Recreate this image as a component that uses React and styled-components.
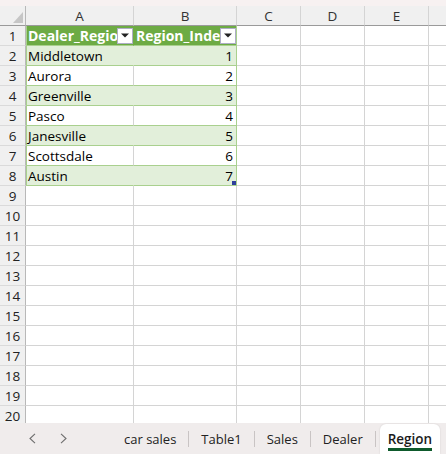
import React from 'react';
import styled, { createGlobalStyle, css } from 'styled-components';

const Global = createGlobalStyle`
  html, body { margin: 0; padding: 0; height: 100%; }
  body { background: #fff; font-family: "Open Sans", "Noto Sans", sans-serif; overflow: hidden; }
  #root { height: 100%; }
  * { box-sizing: border-box; }
`;

const COLS = '26px 108px 103px 64px 64px 64px 64px';
const GREEN = '#6dab44';
const BAND = '#e2efda';
const LINE_G = '#a9d08e';
const GRID = '#d4d4d4';

const Sheet = styled.div`
  display: flex;
  flex-direction: column;
  height: 100vh;
`;

const TopStrip = styled.div`
  height: 6px;
  flex: none;
  background: #f7f1f1;
`;

const GridArea = styled.div`
  flex: 1;
  overflow: hidden;
`;

const ColHeaderRow = styled.div`
  display: grid;
  grid-template-columns: ${COLS};
  height: 20px;
  background: #f0f0f0;
`;

const ColHeader = styled.div`
  display: flex;
  align-items: center;
  justify-content: center;
  border-right: 1px solid ${GRID};
  border-bottom: 1px solid #9a9a9a;
  font-size: 13.5px;
  color: #333;
`;

const Corner = styled.div`
  position: relative;
  border-right: 1px solid #b8b8b8;
  border-bottom: 1px solid #9a9a9a;
  background: #f0f0f0;
  svg { position: absolute; right: 2px; bottom: 2px; }
`;

const Row = styled.div`
  display: grid;
  grid-template-columns: ${COLS};
  height: 20px;
`;

const RowHeader = styled.div`
  display: flex;
  align-items: center;
  justify-content: center;
  background: #f0f0f0;
  border-right: 1px solid #b8b8b8;
  border-bottom: 1px solid #dadada;
  font-size: 13.5px;
  color: #222;
`;

const variants = {
  head: css`
    background: ${GREEN};
    color: #fff;
    font-weight: 700;
    font-size: 14px;
    border-bottom-color: ${LINE_G};
  `,
  band: css`
    background: ${BAND};
    border-bottom-color: ${LINE_G};
  `,
  plain: css`
    background: #fff;
    border-bottom-color: ${LINE_G};
  `,
  empty: css``,
};

const Cell = styled.div`
  position: relative;
  display: flex;
  align-items: center;
  justify-content: ${p => (p.$num ? 'flex-end' : 'flex-start')};
  padding: 0 3px 0 2px;
  border-right: 1px solid ${GRID};
  border-bottom: 1px solid ${GRID};
  font-size: 13.5px;
  color: #000;
  white-space: nowrap;
  overflow: hidden;
  ${p => variants[p.$v || 'empty']}
  ${p => p.$col === 'A' && p.$v !== 'empty' && css`
    box-shadow: inset 1px 0 0 ${LINE_G};
    border-right-color: ${p.$v === 'plain' ? GRID : p.$v === 'head' ? GREEN : BAND};
  `}
  ${p => p.$col === 'B' && p.$v !== 'empty' && css`
    border-right-color: ${LINE_G};
  `}
  ${p => p.$v === 'head' && css`
    padding-right: 0;
  `}
`;

const HeadText = styled.span`
  flex: 1;
  min-width: 0;
  overflow: hidden;
  white-space: nowrap;
`;

const FilterButton = styled.span`
  flex: none;
  width: 16px;
  height: 16px;
  background: #fff;
  border: 1px solid #aeaec6;
  display: flex;
  align-items: center;
  justify-content: center;
`;

const FillHandle = styled.span`
  position: absolute;
  right: 0;
  bottom: 0;
  width: 4px;
  height: 4px;
  background: #2e3f9c;
`;

const TabBar = styled.div`
  flex: none;
  height: 31px;
  background: #f0ecec;
  display: flex;
  align-items: center;
  font-size: 13px;
  color: #222;
`;

const Nav = styled.div`
  display: flex;
  align-items: center;
  gap: 11px;
  padding-left: 22px;
  margin-right: 39px;
`;

const NavButton = styled.span`
  width: 20px;
  height: 20px;
  display: flex;
  align-items: center;
  justify-content: center;
`;

const Tab = styled.span`
  padding: 0 12px;
  white-space: nowrap;
`;

const Separator = styled.span`
  width: 1px;
  height: 16px;
  background: #c9c4c4;
`;

const ActiveTab = styled.span`
  align-self: stretch;
  margin: 1px 0 0 4px;
  padding: 0 8px 0 8px;
  background: #fff;
  border-radius: 6px 6px 0 0;
  box-shadow: 0 0 2px rgba(0,0,0,0.12);
  display: flex;
  align-items: center;
  font-weight: 600;
  font-size: 13.5px;
  color: #1b1b1b;
`;

const ActiveLabel = styled.span`
  padding-top: 4px;
  border-bottom: 3px solid #0e5a2c;
  line-height: 17px;
`;

const Chevron = ({ dir }) => (
  <svg width="7" height="11" viewBox="0 0 7 11">
    <polyline
      points={dir === 'left' ? '6,0.8 1,5.5 6,10.2' : '1,0.8 6,5.5 1,10.2'}
      fill="none"
      stroke="#6e6e6e"
      strokeWidth="1.1"
    />
  </svg>
);

const Arrow = () => (
  <svg width="8" height="5" viewBox="0 0 8 5">
    <polygon points="0,0.5 8,0.5 4,4.5" fill="#222" />
  </svg>
);

const letters = ['A', 'B', 'C', 'D', 'E', ''];
const data = [
  ['Middletown', 1],
  ['Aurora', 2],
  ['Greenville', 3],
  ['Pasco', 4],
  ['Janesville', 5],
  ['Scottsdale', 6],
  ['Austin', 7],
];

const Empties = () =>
  ['C', 'D', 'E', 'F'].map(c => <Cell key={c} />);

export default function App() {
  const rows = [];
  rows.push(
    <Row key={1}>
      <RowHeader>1</RowHeader>
      <Cell $v="head" $col="A">
        <HeadText>Dealer_Region</HeadText>
        <FilterButton><Arrow /></FilterButton>
      </Cell>
      <Cell $v="head" $col="B">
        <HeadText>Region_Index</HeadText>
        <FilterButton><Arrow /></FilterButton>
      </Cell>
      <Empties />
    </Row>
  );
  data.forEach(([name, idx], i) => {
    const v = i % 2 === 0 ? 'band' : 'plain';
    const last = i === data.length - 1;
    rows.push(
      <Row key={i + 2}>
        <RowHeader>{i + 2}</RowHeader>
        <Cell $v={v} $col="A">{name}</Cell>
        <Cell $v={v} $col="B" $num>
          {idx}
          {last && <FillHandle />}
        </Cell>
        <Empties />
      </Row>
    );
  });
  for (let r = 9; r <= 20; r++) {
    rows.push(
      <Row key={r}>
        <RowHeader>{r}</RowHeader>
        <Cell />
        <Cell />
        <Empties />
      </Row>
    );
  }

  return (
    <>
      <Global />
      <Sheet>
        <TopStrip />
        <GridArea>
          <ColHeaderRow>
            <Corner>
              <svg width="10" height="11" viewBox="0 0 10 11">
                <polygon points="10,0 10,11 0,11" fill="#c6c6c6" />
              </svg>
            </Corner>
            {letters.map((l, i) => <ColHeader key={i}>{l}</ColHeader>)}
          </ColHeaderRow>
          {rows}
        </GridArea>
        <TabBar>
          <Nav>
            <NavButton><Chevron dir="left" /></NavButton>
            <NavButton><Chevron dir="right" /></NavButton>
          </Nav>
          <Tab>car sales</Tab>
          <Separator />
          <Tab>Table1</Tab>
          <Separator />
          <Tab>Sales</Tab>
          <Separator />
          <Tab>Dealer</Tab>
          <Separator />
          <ActiveTab><ActiveLabel>Region</ActiveLabel></ActiveTab>
        </TabBar>
      </Sheet>
    </>
  );
}
